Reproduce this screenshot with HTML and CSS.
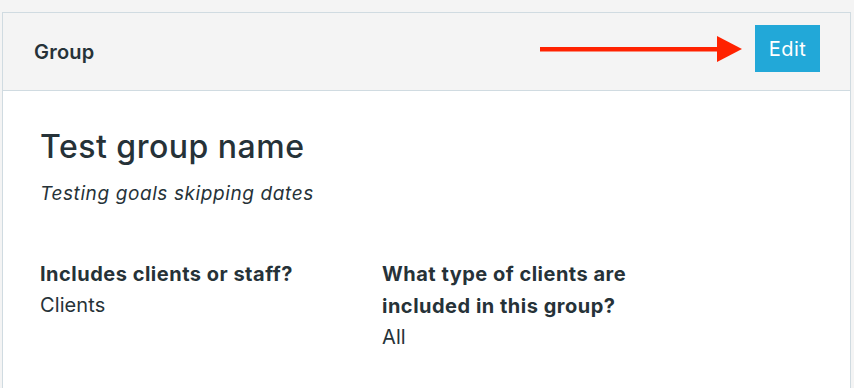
FILE: index.html
```html
<!DOCTYPE html>
<html>
<head>
<meta charset="utf-8">
<link rel="stylesheet" href="styles.css">
</head>
<body>
<div class="card">
  <div class="card-header">
    <h2 class="card-title">Group</h2>
    <div class="actions">
      <svg class="arrow" width="203" height="26" viewBox="0 0 203 26">
        <rect x="0" y="11" width="180" height="4.5" fill="#ff2200"/>
        <polygon points="177,0 202,13 177,26" fill="#ff2200"/>
      </svg>
      <button class="btn-edit">Edit</button>
    </div>
  </div>
  <div class="card-body">
    <h1 class="group-name">Test group name</h1>
    <p class="group-desc">Testing goals skipping dates</p>
    <div class="fields">
      <div class="field">
        <div class="field-label">Includes clients or staff?</div>
        <div class="field-value">Clients</div>
      </div>
      <div class="field">
        <div class="field-label">What type of clients are included in this group?</div>
        <div class="field-value">All</div>
      </div>
    </div>
  </div>
</div>
</body>
</html>
```
FILE: styles.css
```css
* { box-sizing: border-box; }
html, body { margin: 0; }
body {
  background: #f4f4f4;
  font-family: Inter, "Noto Sans", sans-serif;
  color: #263238;
  padding: 12px 3px 0 2px;
}
.card {
  border: 1px solid #d0dbe1;
  border-bottom: none;
  background: #fff;
  min-height: 376px;
}
.card-header {
  display: flex;
  align-items: center;
  justify-content: space-between;
  height: 78px;
  padding: 0 30px 0 31px;
  background: #f4f4f4;
  border-bottom: 1px solid #d0dbe1;
}
.card-title {
  margin: 0;
  font-size: 20px;
  font-weight: 600;
  letter-spacing: 0.2px;
}
.actions {
  display: flex;
  align-items: center;
  margin-bottom: 6px;
}
.arrow { display: block; margin-right: 12px; }
.btn-edit {
  border: none;
  background: #22a8d8;
  color: #fff;
  font-family: Inter, "Noto Sans", sans-serif;
  font-size: 20px;
  font-weight: 400;
  letter-spacing: 0.5px;
  width: 65px;
  height: 47px;
  padding: 0;
}
.card-body {
  padding: 36px 37px 0 37px;
}
.group-name {
  margin: 0;
  font-size: 32px;
  font-weight: 500;
  line-height: 40px;
  letter-spacing: 0.5px;
}
.group-desc {
  margin: 14px 0 0;
  font-size: 19px;
  font-style: italic;
  line-height: 26px;
  letter-spacing: 0.6px;
}
.fields {
  display: grid;
  grid-template-columns: 300px 280px;
  column-gap: 42px;
  margin-top: 51px;
}
.field-label {
  font-size: 20px;
  font-weight: 700;
  line-height: 32px;
  letter-spacing: 0.5px;
}
.field-value {
  font-size: 20px;
  line-height: 31px;
  letter-spacing: 0.1px;
}
```
